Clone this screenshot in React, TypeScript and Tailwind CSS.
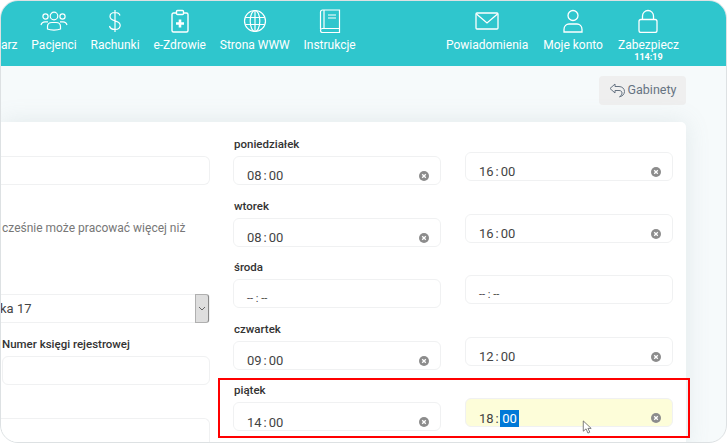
import type { ReactNode } from "react";

const icon = "h-[24px] w-[24px] fill-none stroke-white stroke-[1.2]";

const PatientsIcon = () => (
  <svg viewBox="0 0 28 24" className="h-[24px] w-[28px] fill-none stroke-white stroke-[1.2]">
    <circle cx="14" cy="7" r="3.800" />
    <circle cx="5.500" cy="7.500" r="2.600" />
    <circle cx="22.500" cy="7.500" r="2.600" />
    <path d="M7.500 20v-2.500c0-2.500 2-4 4.500-4h4c2.500 0 4.500 1.500 4.500 4V20c-3 1.400-10 1.400-13 0Z" />
    <path d="M1 16c.5-2 2-3.200 4-3.200h3M27 16c-.5-2-2-3.200-4-3.200h-3" />
  </svg>
);

const DollarIcon = () => (
  <svg viewBox="0 0 24 24" className={icon}>
    <path d="M12 1v22M17 6.500C16.500 4.500 14.500 3.500 12 3.500c-3 0-5 1.600-5 4s2 3.500 5 4.300c3 .8 5.200 2 5.200 4.500s-2.200 4.200-5.200 4.200c-2.800 0-5-1.200-5.500-3.500" />
  </svg>
);

const ClipboardIcon = () => (
  <svg viewBox="0 0 24 24" className="h-[24px] w-[24px] fill-none stroke-white stroke-[1.4]">
    <path d="M8.500 4H5.500A1.500 1.500 0 0 0 4 5.500v16A1.500 1.500 0 0 0 5.500 23h13a1.500 1.500 0 0 0 1.500-1.500v-16A1.500 1.500 0 0 0 18.500 4h-3" />
    <rect x="8.500" y="1.500" width="7" height="4" rx="1" />
    <path d="M12 10.500v8M8 14.500h8" strokeWidth="2.600" />
  </svg>
);

const GlobeIcon = () => (
  <svg viewBox="0 0 24 24" className={icon}>
    <circle cx="12" cy="12" r="10.500" />
    <ellipse cx="12" cy="12" rx="4.800" ry="10.500" />
    <path d="M12 1.500v21M2.200 8.500h19.600M2.200 15.500h19.600" />
  </svg>
);

const BookIcon = () => (
  <svg viewBox="0 0 24 24" className={icon}>
    <path d="M2.500 20V3a2 2 0 0 1 2-2h17v18.500h-17a2 2 0 0 0 0 4h17v-4" />
    <path d="M6 1v18.500M10 6h8M10 9h8" />
  </svg>
);

const MailIcon = () => (
  <svg viewBox="0 0 24 24" className="h-[24px] w-[24px] fill-none stroke-white stroke-[1.300]">
    <rect x="1" y="4" width="22" height="16" rx="1" />
    <path d="m1.500 5 10.500 9L22.500 5" />
  </svg>
);

const UserIcon = () => (
  <svg viewBox="0 0 24 24" className="h-[24px] w-[24px] fill-none stroke-white stroke-[1.300]">
    <circle cx="12" cy="6.500" r="5" />
    <path d="M3 23v-2.500C3 17 5.500 15 8 15h8c2.500 0 5 2 5 5.500V23Z" />
  </svg>
);

const LockIcon = () => (
  <svg viewBox="0 0 24 24" className="h-[24px] w-[24px] fill-none stroke-white stroke-[1.300]">
    <rect x="3" y="10.500" width="18" height="13" rx="2" />
    <path d="M6.500 10.500V7a5.500 5.500 0 0 1 11 0v3.500" />
  </svg>
);

const NavItem = ({ label, children, sub }: { label: string; children?: ReactNode; sub?: string }) => (
  <div className="relative flex flex-col items-center">
    <div className="flex h-[24px] items-center justify-center">{children}</div>
    <span className="mt-[4px] whitespace-nowrap text-[12px] leading-[16px] text-white">{label}</span>
    {sub && <span className="absolute top-[42px] text-[9px] leading-[12px] font-bold text-white">{sub}</span>}
  </div>
);

const ClearIcon = () => (
  <svg viewBox="0 0 10 10" className="h-[10px] w-[10px] shrink-0">
    <circle cx="5" cy="5" r="5" fill="#8c8c8c" />
    <path d="m3.200 3.200 3.600 3.600m0-3.600L3.200 6.800" stroke="#fff" strokeWidth="1.300" />
  </svg>
);

const TimeInput = ({ value, selected, yellow }: { value?: string; selected?: boolean; yellow?: boolean }) => {
  const [hh, mm] = (value ?? "").split(":");
  return (
    <div
      className={`flex h-[29px] w-[208px] items-center rounded-[6px] border border-[#f0f1f2] pt-[11px] pr-[11px] pl-[13px] ${yellow ? "bg-[#fdfdd9]" : "bg-white"}`}
    >
      {value ? (
        <>
          <span className="flex h-[18px] flex-1 items-center text-[13px] text-[#444]">
            {hh}
            {selected ? (
              <>
                <span className="w-[5px] text-right">:</span>
                <span className="ml-[1px] bg-[#0078d7] px-[2.5px] leading-[17px] text-white">{mm}</span>
              </>
            ) : (
              <>
                <span className="w-[7px] text-center">:</span>
                {mm}
              </>
            )}
          </span>
          <ClearIcon />
        </>
      ) : (
        <span className="text-[11px] leading-[14px] text-[#444]">-- : --</span>
      )}
    </div>
  );
};

const HoursRow = ({ day, from, to, selected }: { day: string; from?: string; to?: string; selected?: boolean }) => (
  <div className="flex h-[61.6px] items-end gap-[24px]">
    <div className="flex flex-col">
      <span className="mb-[5px] ml-[1px] text-[11.5px] leading-[14px] font-medium text-[#333]">{day}</span>
      <TimeInput value={from} />
    </div>
    <div className="mb-[4px]">
      <TimeInput value={to} selected={selected} yellow={selected} />
    </div>
  </div>
);

export default function App() {
  return (
    <div className="h-[443px] w-[727px] overflow-hidden bg-white font-['Roboto',sans-serif]">
      <div className="relative flex h-[443px] flex-col overflow-hidden rounded-[18px] border border-[#dde1e3] bg-[#f6fafb]">
        <header className="flex h-[65px] shrink-0 items-start justify-between bg-[#2fc6cd] pt-[8px] pr-[47px] pl-0">
          <nav className="flex gap-[13.8px]">
            <NavItem label="arz" />
            <NavItem label="Pacjenci">
              <PatientsIcon />
            </NavItem>
            <NavItem label="Rachunki">
              <DollarIcon />
            </NavItem>
            <NavItem label="e-Zdrowie">
              <ClipboardIcon />
            </NavItem>
            <NavItem label="Strona WWW">
              <GlobeIcon />
            </NavItem>
            <NavItem label="Instrukcje">
              <BookIcon />
            </NavItem>
          </nav>
          <nav className="flex gap-[15px]">
            <NavItem label="Powiadomienia">
              <MailIcon />
            </NavItem>
            <NavItem label="Moje konto">
              <UserIcon />
            </NavItem>
            <NavItem label="Zabezpiecz" sub="114:19">
              <LockIcon />
            </NavItem>
          </nav>
        </header>

        <div className="flex h-[56px] shrink-0 items-start justify-end pt-[10px] pr-[40px]">
          <button className="flex h-[29px] w-[87px] items-center justify-center gap-[3px] rounded-[4px] bg-[#efefef] text-[12.5px] text-[#667382]">
            <svg viewBox="0 0 16 15" className="h-[15px] w-[16px] fill-none stroke-[#667382] stroke-[1]">
              <path d="M6 1 1 5.500 6 10V7.500h4c2 0 3 1 3 2.500s-1 3-2.500 3.800c3-.4 5-2.800 5-5.300 0-3-2.500-5-5.500-5H6Z" />
            </svg>
            Gabinety
          </button>
        </div>

        <main className="flex w-[685px] flex-1 rounded-tr-[5px] rounded-bl-[18px] bg-white pr-[13px] shadow-[0_0_24px_rgba(120,140,150,0.16)]">
          <section className="w-[209px] shrink-0 pt-[34px]">
            <div className="h-[29px] rounded-r-[6px] border border-l-0 border-[#f0f1f2]" />
            <p className="mt-[35px] ml-[1px] text-[12px] leading-[16px] whitespace-nowrap text-[#777]">
              cześnie może pracować więcej niż
            </p>
            <div className="mt-[58px] flex h-[29px] items-center justify-between rounded-r-[4px] border border-l-0 border-[#f0f1f2] text-[13px] text-[#444]">
              <span className="-ml-[1px]">ka 17</span>
              <span className="flex h-[29px] w-[14px] items-center justify-center rounded-r-[3px] border border-[#b0b0b0] border-r-[#888] bg-[#dedede]">
                <svg viewBox="0 0 8 5" className="h-[5px] w-[8px] fill-none stroke-[#666]">
                  <path d="m1 1 3 3 3-3" />
                </svg>
              </span>
            </div>
            <span className="mt-[14px] ml-[1px] block text-[11.5px] leading-[14px] font-medium text-[#333]">
              Numer księgi rejestrowej
            </span>
            <div className="mt-[5px] ml-[1px] h-[29px] rounded-[6px] border border-[#f0f1f2]" />
            <div className="mt-[33px] h-[30px] rounded-tr-[6px] border-t border-r border-[#f0f1f2]" />
          </section>
          <section className="ml-[23px] flex flex-col pt-[1.5px]">
            <HoursRow day="poniedziałek" from="08:00" to="16:00" />
            <HoursRow day="wtorek" from="08:00" to="16:00" />
            <HoursRow day="środa" />
            <HoursRow day="czwartek" from="09:00" to="12:00" />
            <HoursRow day="piątek" from="14:00" to="18:00" selected />
          </section>
        </main>

        {/* highlight drawn on top of the screenshot */}
        <div className="absolute top-[377px] left-[217px] h-[60px] w-[472px] border-2 border-[#ff0000]" />
        <svg viewBox="0 0 10 15" className="absolute top-[419px] left-[581px] h-[14px] w-[10px]">
          <path d="M1 1v11l3-2.500L6 14l2-1-2-4h3.500Z" fill="#fff" stroke="#555" strokeWidth="0.800" />
        </svg>
      </div>
    </div>
  );
}
